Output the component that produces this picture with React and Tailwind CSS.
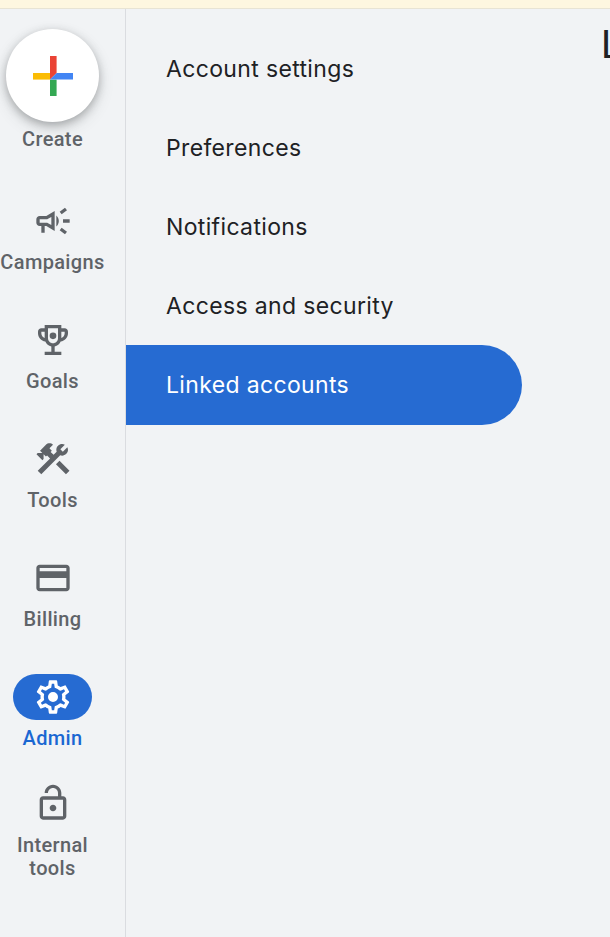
import React from "react";

const Campaign = "M18 11v2h4v-2h-4zm-2 6.61c.96.71 2.21 1.65 3.2 2.39.4-.53.8-1.07 1.2-1.6-.99-.74-2.24-1.68-3.2-2.4-.4.54-.8 1.08-1.2 1.61zM20.4 5.6c-.4-.53-.8-1.07-1.2-1.6-.99.74-2.24 1.68-3.2 2.4.4.53.8 1.07 1.2 1.6.96-.72 2.21-1.65 3.2-2.4zM4 9c-1.1 0-2 .9-2 2v2c0 1.1.9 2 2 2h1v4h2v-4h1l5 3V6L8 9H4zm5.03 1.71L11 9.53v4.94l-1.97-1.18-.48-.29H4v-2h4.55l.48-.29zM15.5 12c0-1.33-.58-2.53-1.5-3.35v6.69c.92-.81 1.5-2.01 1.5-3.34z";
const Trophy = "M19 5h-2V3H7v2H5c-1.1 0-2 .9-2 2v1c0 2.55 1.92 4.63 4.39 4.94.63 1.5 1.98 2.63 3.61 2.96V19H7v2h10v-2h-4v-3.1c1.63-.33 2.98-1.46 3.61-2.96C19.08 12.63 21 10.55 21 8V7c0-1.1-.9-2-2-2zM5 8V7h2v3.82C5.84 10.4 5 9.3 5 8zm7 6c-1.65 0-3-1.35-3-3V5h6v6c0 1.65-1.35 3-3 3zm7-6c0 1.3-.84 2.4-2 2.82V7h2v1zM12 7.5a2 2 0 1 0 0 4 2 2 0 0 0 0-4z";
const Construction = "M13.783 15.172l2.121-2.121 5.996 5.996-2.121 2.121zM17.5 10c1.93 0 3.5-1.57 3.5-3.5 0-.58-.16-1.12-.41-1.6l-2.7 2.7-1.49-1.49 2.7-2.7c-.48-.25-1.02-.41-1.6-.41C15.57 3 14 4.57 14 6.5c0 .41.08.8.21 1.16l-1.85 1.85-1.78-1.78.71-.71-1.41-1.41L12 3.49c-1.17-1.17-3.07-1.17-4.24 0L4.22 7.03l1.41 1.41H2.81l-.71.71 3.54 3.54.71-.71V9.15l1.41 1.41.71-.71 1.78 1.78-7.41 7.41 2.12 2.12L16.34 9.79c.36.13.75.21 1.16.21z";
const Card = "M20 4H4c-1.11 0-1.99.89-1.99 2L2 18c0 1.11.89 2 2 2h16c1.11 0 2-.89 2-2V6c0-1.11-.89-2-2-2zm0 14H4v-6h16v6zm0-10H4V6h16v2z";
const Gear = "M19.43 12.98c.04-.32.07-.64.07-.98 0-.34-.03-.66-.07-.98l2.11-1.65c.19-.15.24-.42.12-.64l-2-3.46c-.09-.16-.26-.25-.44-.25-.06 0-.12.01-.17.03l-2.49 1c-.52-.4-1.08-.73-1.69-.98l-.38-2.65C14.46 2.18 14.25 2 14 2h-4c-.25 0-.46.18-.49.42l-.38 2.65c-.61.25-1.17.59-1.69.98l-2.49-1c-.06-.02-.12-.03-.18-.03-.17 0-.34.09-.43.25l-2 3.46c-.13.22-.07.49.12.64l2.11 1.65c-.04.32-.07.65-.07.98 0 .33.03.66.07.98l-2.11 1.65c-.19.15-.24.42-.12.64l2 3.46c.09.16.26.25.44.25.06 0 .12-.01.17-.03l2.49-1c.52.4 1.08.73 1.69.98l.38 2.65c.03.24.24.42.49.42h4c.25 0 .46-.18.49-.42l.38-2.65c.61-.25 1.17-.59 1.69-.98l2.49 1c.06.02.12.03.18.03.17 0 .34-.09.43-.25l2-3.46c.12-.22.07-.49-.12-.64l-2.11-1.65zm-1.98-1.71c.04.31.05.52.05.73 0 .21-.02.43-.05.73l-.14 1.13.89.7 1.08.84-.7 1.21-1.27-.51-1.04-.42-.9.68c-.43.32-.84.56-1.25.73l-1.06.43-.16 1.13-.2 1.35h-1.4l-.19-1.35-.16-1.13-1.06-.43c-.43-.18-.83-.41-1.23-.71l-.91-.7-1.06.43-1.27.51-.7-1.21 1.08-.84.89-.7-.14-1.13c-.03-.31-.05-.54-.05-.74s.02-.43.05-.73l.14-1.13-.89-.7-1.08-.84.7-1.21 1.27.51 1.04.42.9-.68c.43-.32.84-.56 1.25-.73l1.06-.43.16-1.13.2-1.35h1.39l.19 1.35.16 1.13 1.06.43c.43.18.83.41 1.23.71l.91.7 1.06-.43 1.27-.51.7 1.21-1.07.85-.89.7.14 1.13zM12 9a3 3 0 1 0 0 6 3 3 0 0 0 0-6z";
const LockOpen = "M18 8h-1V6c0-2.76-2.24-5-5-5S7 3.24 7 6h2c0-1.66 1.34-3 3-3s3 1.34 3 3v2H6c-1.1 0-2 .9-2 2v10c0 1.1.9 2 2 2h12c1.1 0 2-.9 2-2V10c0-1.1-.9-2-2-2zm0 12H6V10h12v10zm-6-3c1.1 0 2-.9 2-2s-.9-2-2-2-2 .9-2 2 .9 2 2 2z";

const NavItems = [
  { label: "Campaigns", icon: Campaign },
  { label: "Goals", icon: Trophy },
  { label: "Tools", icon: Construction },
  { label: "Billing", icon: Card },
];

const MenuItems = ["Account settings", "Preferences", "Notifications", "Access and security"];

function Icon({ d, className }) {
  return (
    <svg viewBox="0 0 24 24" className={className} fill="currentColor">
      <path d={d} />
    </svg>
  );
}

function GooglePlus() {
  return (
    <svg viewBox="0 0 40 40" className="w-10 h-10">
      <polygon points="17,0 23.6,0 23.6,17 17,23.6" fill="#ea4335" />
      <polygon points="0,17 17,17 17,23.6 0,23.6" fill="#fbbc04" />
      <polygon points="17,23.6 23.6,23.6 23.6,40 17,40" fill="#34a853" />
      <polygon points="17,23.6 23.6,17 40,17 40,23.6" fill="#4285f4" />
    </svg>
  );
}

function NavItem({ label, icon }) {
  return (
    <div className="h-[119px] last:h-[118px] flex flex-col items-center">
      <div className="w-[79px] h-[44px] flex items-center justify-center text-[#5f6368]">
        <Icon d={icon} className="w-10 h-10" />
      </div>
      <span className="mt-[7px] text-[20px] leading-[24px] font-medium tracking-[0.35px] text-[#5f6368]">{label}</span>
    </div>
  );
}

export default function App() {
  return (
    <div className="w-[610px] h-[937px] overflow-hidden flex flex-col bg-[#f1f3f5] font-['Roboto',sans-serif]">
      <div className="h-[9px] shrink-0 bg-[#fef7e0] border-b border-[#e8e4d4]" />
      <div className="flex-1 flex min-h-0">
        <aside className="w-[126px] shrink-0 pr-[20px] border-r border-[#dadce0] flex flex-col">
          <div className="h-[190px] pt-[20px] flex flex-col items-center">
            <div className="w-[93px] h-[93px] rounded-full bg-white shadow-[0_3px_8px_rgba(60,64,67,0.35),0_6px_16px_rgba(60,64,67,0.15)] flex items-center justify-center">
              <GooglePlus />
            </div>
            <span className="mt-[5px] text-[20px] leading-[24px] font-medium tracking-[0.35px] text-[#5f6368]">Create</span>
          </div>
          <div>
            {NavItems.map(item => (
              <NavItem key={item.label} {...item} />
            ))}
          </div>
          <div className="h-[109px] flex flex-col items-center">
            <div className="w-[79px] h-[46px] rounded-full bg-[#266bd2] flex items-center justify-center text-white">
              <Icon d={Gear} className="w-10 h-10" />
            </div>
            <span className="mt-[6px] text-[20px] leading-[24px] font-medium tracking-[0.35px] text-[#1a67d2]">Admin</span>
          </div>
          <div className="flex flex-col items-center">
            <Icon d={LockOpen} className="w-10 h-10 text-[#5f6368]" />
            <span className="mt-[11px] text-center text-[20px] leading-[23px] font-medium tracking-[0.35px] text-[#5f6368]">
              Internal
              <br />
              tools
            </span>
          </div>
        </aside>
        <nav className="w-[475px] shrink-0 pt-[20px]">
          {MenuItems.map(item => (
            <div key={item} className="h-[79px] pl-[40px] pt-[2px] flex items-center text-[23px] tracking-[0.35px] text-[#202124] font-['Inter',sans-serif]">
              {item}
            </div>
          ))}
          <div className="w-[396px] h-[80px] pl-[40px] pt-px flex items-center rounded-r-full bg-[#266bd2] text-[23px] tracking-[0.35px] text-white font-['Inter',sans-serif]">
            Linked accounts
          </div>
        </nav>
        <main className="flex-1 min-w-0 overflow-hidden pt-[12px]">
          <h1 className="text-[39px] leading-[48px] whitespace-nowrap text-[#202124] font-['Roboto',sans-serif]">Linked accounts</h1>
        </main>
      </div>
    </div>
  );
}
